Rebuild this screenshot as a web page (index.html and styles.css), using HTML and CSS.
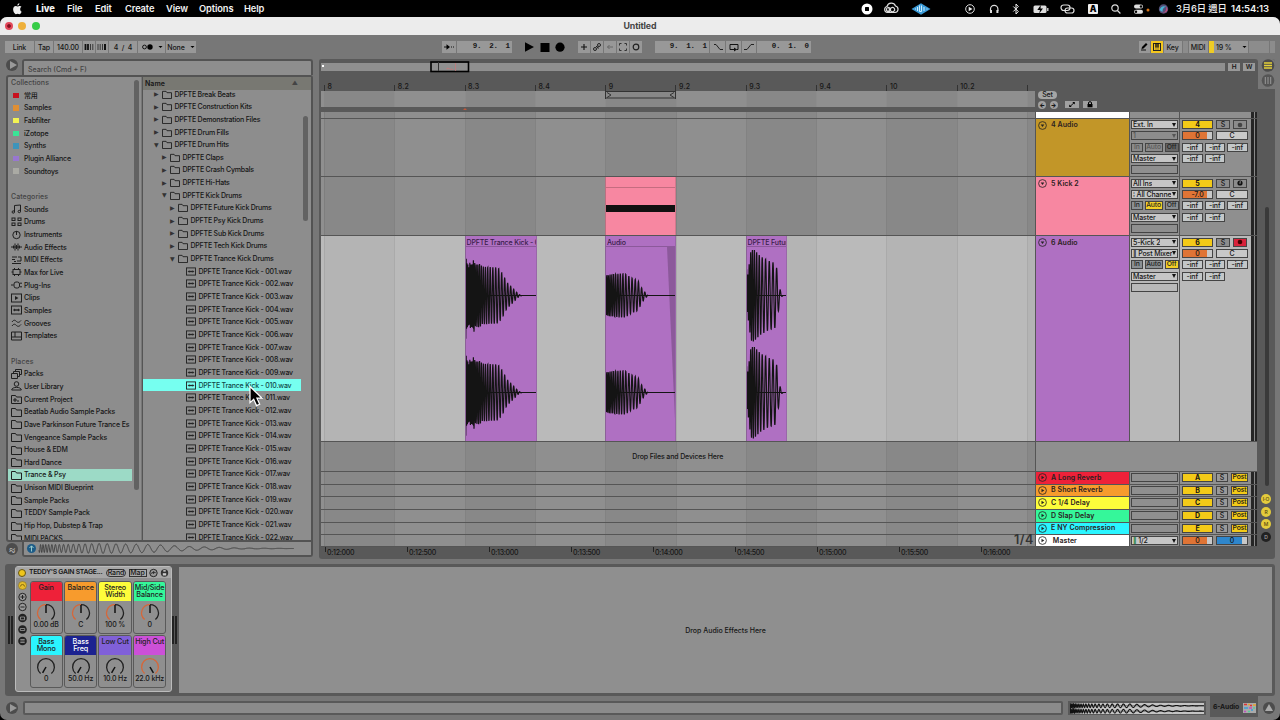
FILE: index.html
```html
<!DOCTYPE html>
<html lang="en">
<head>
<meta charset="utf-8">
<title>Untitled</title>
<link rel="stylesheet" href="styles.css">
</head>
<body>
<div class="menubar">
  <svg class="apple" viewBox="0 0 12 14"><path d="M8.2 0.3C8.3 1.8 7 3 5.8 3 5.7 1.600 6.900.500 8.200.300zM10.800 10.200C10.100 11.800 9.300 13 8.300 13 7.500 13 7.100 12.500 6.200 12.500 5.300 12.500 4.900 13 4.100 13 2.600 13 .900 10 .900 7.400.900 4.800 2.500 3.500 4 3.500 4.900 3.500 5.600 4.100 6.200 4.100 6.700 4.100 7.600 3.400 8.700 3.400 9.500 3.500 10.200 3.900 10.600 4.500 8.500 5.700 8.800 9.200 10.800 10.200z"/></svg>
  <span class="m-live">Live</span><span class="m-file">File</span><span class="m-edit">Edit</span><span class="m-create">Create</span><span class="m-view">View</span><span class="m-options">Options</span><span class="m-help">Help</span>
  <div class="tray">
    <svg class="w20" viewBox="0 0 20 16"><circle cx="10" cy="8" r="5.500" fill="#fff"/><rect x="8" y="6" width="4" height="4" rx=".5" fill="#000"/></svg>
    <svg class="w30" viewBox="0 0 30 16" fill="none" stroke="#ddd" stroke-width="1.200"><path d="M11 11.500h8a3.300 3.300 0 0 0 .5-6.500A4.500 4.500 0 0 0 11 5.500 3.100 3.100 0 0 0 11 11.500z"/><circle cx="12.500" cy="8.500" r="2"/><path d="M12 6l3 4.200c2 1.500 4.500-.5 3.500-2.500s-3-1.500-4 0l-2 2"/></svg>
    <svg class="w30" viewBox="0 0 30 16"><path d="M5.500 8L15 2.200 24.500 8 15 13.800z" fill="#3b9bd8"/><path d="M9 8h1M11.500 6v4M13.500 4.500v6h2v-6M18 6v4M20.500 8h1" stroke="#cef" fill="none"/></svg>
    <svg class="w28 g1" viewBox="0 0 28 16"><circle cx="14" cy="8" r="4.300" fill="none" stroke="#ddd"/><path d="M12.700 5.800L16.500 8l-3.800 2.200z" fill="#eee"/></svg>
    <svg class="w20" viewBox="0 0 20 16" fill="none" stroke="#ddd" stroke-width="1.200"><path d="M6.500 10V8a3.700 3.700 0 0 1 7.400 0v2"/><path d="M7 9v3M13.400 9v3" stroke-width="2"/></svg>
    <svg class="w24" viewBox="0 0 24 16" fill="none" stroke="#eee"><path d="M9.300 5.500l5 5L12 13V3l2.300 2.500-5 5"/></svg>
    <svg class="w26" viewBox="0 0 26 16"><rect x="5.500" y="4.500" width="13" height="7.500" rx="1.500" fill="#ddd"/><path d="M19.800 7v3" stroke="#ddd" stroke-width="1.300"/><path d="M12.800 4l-3.500 5H12l-.8 3.500L15 7.500h-2.500z" fill="#000"/></svg>
    <svg class="w28" viewBox="0 0 28 16" fill="none" stroke="#ddd" stroke-width="1.200"><rect x="7" y="4" width="9" height="5.500" rx="2.700"/><rect x="11" y="7" width="9" height="5" rx="2.500"/></svg>
    <b class="ime">A</b>
    <svg class="w24" viewBox="0 0 24 16" fill="none" stroke="#ddd" stroke-width="1.200"><circle cx="11" cy="7" r="3.200"/><path d="M13.400 9.500l3 3"/></svg>
    <svg class="w24 g2" viewBox="0 0 24 16"><rect x="2" y="3.500" width="9" height="4" rx="2" fill="#ddd"/><rect x="2" y="8.700" width="9" height="4" rx="2" fill="#ddd"/><circle cx="9" cy="5.500" r="1.200"/><circle cx="4" cy="10.700" r="1.200"/><circle cx="16" cy="9" r="1.500" fill="#d87518"/></svg>
    <svg class="w20" viewBox="0 0 20 16"><circle cx="7.500" cy="8" r="4.700" fill="#555078"/><path d="M3.500 9c2-5 5-4 7-3-3 0-4 2-4 5z" fill="#48b5d6"/><path d="M5.500 12c4 0 6-4 4-7 3 3 3 7-4 7z" fill="#c84878"/></svg>
    <span class="date">3月6日 週日</span><span class="clock">14:54:13</span>
  </div>
</div>

<div class="window">
  <div class="titlebar"><i class="tl red"></i><i class="tl yel"></i><i class="tl grn"></i><span>Untitled</span></div>

  <div class="toolbar">
    <div class="group t1">
      <span class="c" style="width:29px">Link</span><span class="c" style="width:18px">Tap</span><span class="c" style="width:28px">140.00</span>
      <span class="c" style="width:12px"><svg viewBox="0 0 10 8" width="10" height="8"><path d="M1.500 1v6M4 1v6" stroke="#111" stroke-width="1.800"/><path d="M6.500 1v6M8.800 1v6" stroke="#222" stroke-width=".8"/></svg></span>
      <span class="c" style="width:12px"><svg viewBox="0 0 10 8" width="10" height="8"><path d="M1 1v6M3.200 1v6M5.500 1v6" stroke="#222" stroke-width=".8"/><path d="M8 1v6" stroke="#111" stroke-width="2"/></svg></span>
      <span class="c" style="width:28px">4&nbsp; / &nbsp;4</span>
      <span class="c" style="width:27px"><svg viewBox="0 0 24 8" width="24" height="8"><circle cx="4.500" cy="4" r="1.900" fill="none" stroke="#111"/><circle cx="10" cy="4" r="2.700"/><path d="M18.500 3h4l-2 2z"/></svg></span>
      <span class="c" style="width:30px">None<svg class="dd" viewBox="0 0 5 4"><path d="M.5 1h4l-2 2z"/></svg></span>
    </div>
    <div class="group t2">
      <span class="c" style="width:14px"><svg viewBox="0 0 12 8" width="12" height="8"><path d="M1 4h4M8 4h1M10 4h1" stroke="#111"/><path d="M3.500 1.200L7 4 3.500 6.800z"/></svg></span><span class="c mono" style="width:55px">9. &nbsp;2. &nbsp;1</span>
    </div>
    <svg class="transport" viewBox="0 0 44 14"><path d="M2 2.200L11 7l-9 4.800z"/><rect x="17.500" y="3" width="9" height="9"/><circle cx="37" cy="7.200" r="4.600"/></svg>
    <div class="group t3">
      <span class="c" style="width:12px"><svg viewBox="0 0 10 10" width="10" height="10"><path d="M5 2v6M2 5h6" stroke="#111" stroke-width="1.100"/></svg></span>
      <span class="c" style="width:12px"><svg viewBox="0 0 10 10" width="10" height="10" fill="none" stroke="#222"><circle cx="3" cy="7" r="1.500"/><circle cx="7" cy="3" r="1.500"/><path d="M4 4.500h1.200L5.500 6H7"/></svg></span>
      <span class="c" style="width:12px"><svg viewBox="0 0 10 10" width="10" height="10" fill="none" stroke="#666"><path d="M8 5H2.500M4.500 3l-2 2 2 2"/></svg></span>
      <span class="c" style="width:12px"><svg viewBox="0 0 10 10" width="10" height="10" fill="none" stroke="#333"><path d="M1.500 3.500v-2h2M6.500 1.500h2v2M8.500 6.500v2h-2M3.500 8.500h-2v-2"/></svg></span>
      <span class="c" style="width:12px"><svg viewBox="0 0 10 10" width="10" height="10"><circle cx="5" cy="5" r="2.800" fill="none" stroke="#222" stroke-width="1.200"/></svg></span>
    </div>
    <div class="group t4">
      <span class="c mono" style="width:54px">9. &nbsp;1. &nbsp;1</span>
      <span class="c" style="width:15px"><svg viewBox="0 0 12 10" width="12" height="10" fill="none" stroke="#222"><path d="M2 2.500h2l4 5h3"/></svg></span>
      <span class="c" style="width:15px"><svg viewBox="0 0 12 10" width="12" height="10" fill="none" stroke="#111"><path d="M6 7.500H2v-5h8v5H8.500"/><path d="M6 5.500l3 2-3 2z" fill="#111" stroke="none"/></svg></span>
      <span class="c" style="width:14px"><svg viewBox="0 0 12 10" width="12" height="10" fill="none" stroke="#222"><path d="M1 7.500h3l4-5h3"/></svg></span>
      <span class="c mono" style="width:54px">0. &nbsp;1. &nbsp;0</span>
    </div>
    <div class="group t5">
      <span class="c" style="width:11px"><svg viewBox="0 0 10 10" width="10" height="10"><path d="M2 8h5" stroke="#111"/><path d="M2.500 7L3 5l4-4 1.500 1.500L4.500 6.500z"/></svg></span>
      <span class="c on" style="width:12px"><svg viewBox="0 0 10 10" width="10" height="10"><rect x="1.500" y="1.500" width="7" height="7" fill="none" stroke="#222"/><path d="M4 1v4.500M6 1v4.500" stroke="#111" stroke-width="1.400"/><path d="M4 5v4M6 5v4" stroke="#333" stroke-width=".5"/></svg></span>
      <span class="c" style="width:18px">Key</span><span class="c dim" style="width:5px"></span><span class="c" style="width:19px">MIDI</span>
      <span class="c cpu" style="width:39px">19 %<svg class="dd" viewBox="0 0 5 4"><path d="M.5 1h4l-2 2z"/></svg></span><span class="c dim" style="width:20px"></span><span class="c dim" style="width:5px"></span>
    </div>
  </div>

  <div class="main">
    <div class="browser">
      <div class="search-row"><span class="round play-btn"></span><div class="search">Search (Cmd + F)</div></div>
      <div class="lists">
        <div class="sidebar"><div class="side-rows" id="side"></div><i class="sbar side-thumb"></i></div>
        <div class="files">
          <div class="name-head"><span>Name</span><i>▲</i></div>
          <div class="tree-clip"><div class="tree" id="tree"></div><i class="sbar tree-thumb"></i></div>
        </div>
      </div>
      <div class="preview-row"><span class="round groove">≈</span>
        <div class="preview"><svg viewBox="0 0 287 13" width="287" height="13"><circle cx="7.500" cy="6.500" r="4.500" fill="#1d5b87"/><path d="M7.500 9.500V4M5.500 6l2-2.200 2 2.200" stroke="#9cc" fill="none"/><path id="previewWave" fill="none" stroke="#3d3d3d" stroke-width=".9"/></svg></div>
      </div>
    </div>

    <div class="arrangement">
      <div class="arr-top">
        <div class="arr-head">
          <div class="overview-row">
            <div class="overview"><i class="ov-white"></i><svg class="ov-box" viewBox="0 0 40 12"><rect x="1" y="1" width="37.500" height="9.500" fill="none" stroke="#000" stroke-width="1.600"/><path d="M8.500 1v9" stroke="#333"/><path d="M17 8.500V7l3 1 3 .5M25.500 2v8" stroke="#c77" stroke-width=".7" fill="none"/></svg></div>
            <span class="hw">H</span><span class="hw">W</span>
          </div>
          <div class="beats" id="beats"></div>
        </div>
        <div class="view-switch">
          <svg viewBox="0 0 14 30" width="14" height="30"><circle cx="7" cy="6.500" r="6.300" fill="#4c4c4c"/><path d="M3 4h8M3 6.500h8M3 9h8" stroke="#e4cf38" stroke-width="1.500"/><circle cx="7" cy="21.500" r="6.300" fill="#555"/><path d="M4.300 18v7M7 18v7M9.700 18v7" stroke="#999"/></svg>
        </div>
      </div>
      <div class="arr-ruler">
        <div class="strip zebra"><div class="loop"><svg viewBox="0 0 71 8" width="71" height="8" fill="none" stroke="#333"><path d="M.5 0v8M70.500 0v8M0 .5h71M0 7h71M2 1.500l4 2.500-4 2.500M69 1.500L65 4l4 2.500"/></svg></div><i class="playmark"></i></div>
        <div class="set">
          <span class="pill">Set</span>
          <div class="set-row"><span class="rb">←</span><span class="rb">→</span><span class="sb"><svg viewBox="0 0 12 7" width="12" height="7"><path d="M4 5.500L8 1.800" stroke="#111"/><path d="M6.300 1h2.500v2.500zM3.200 3.500V6h2.500z"/></svg></span><span class="sb"><svg viewBox="0 0 12 7" width="12" height="7"><rect x="3.500" y="3" width="5" height="3.300"/><path d="M4.500 3V2a1.500 1.300 0 0 1 3 0v1" fill="none" stroke="#000"/></svg></span></div>
        </div>
      </div>
      <div class="arr-body">
        <div class="tracks" id="tracks"></div>
        <div class="arr-right"><i class="vbar"></i>
          <span class="badge">I·O</span><span class="badge">R</span><span class="badge">M</span><span class="badge off">D</span></div>
      </div>
      <div class="times" id="times"></div>
      <span class="quarter">1/4</span>
    </div>
  </div>

  <div class="device-panel">
    <div class="bars"><i></i><i></i></div>
    <div class="rack">
      <div class="rack-title"><i class="led"></i><b>TEDDY'S GAIN STAGE...</b><span class="rt pill2">Rand</span><span class="rt">Map</span>
        <svg viewBox="0 0 20 10" width="20" height="10"><circle cx="4.500" cy="5" r="3.700" fill="#999" stroke="#222"/><path d="M2.500 5.500c1-3 2 2 2-1s1 2 2 0" stroke="#111" fill="none"/><circle cx="15.500" cy="5" r="3.700" fill="#333"/><rect x="13.800" y="5.200" width="3.400" height="2.300" fill="#ccc"/><rect x="14.300" y="2" width="2.400" height="1.700" fill="#bbb"/></svg></div>
      <div class="rack-body">
        <svg class="rack-icons" viewBox="0 0 12 108" width="12" height="108"><circle cx="5.500" cy="4.500" r="4" fill="#e5bd28" stroke="#8a7524" stroke-width=".7"/><path d="M3.500 5.500a2 2 0 1 1 4 0" fill="none" stroke="#876d10"/>
          <g fill="#999" stroke="#222"><circle cx="5.500" cy="16" r="3.700"/><circle cx="5.500" cy="26" r="3.700"/><path d="M3.500 16h4M5.500 14v4M3.500 26h4"/></g>
          <g fill="#222"><circle cx="5.500" cy="37" r="4.300"/><circle cx="5.500" cy="48.500" r="4.300"/><circle cx="5.500" cy="60" r="4.300"/></g><path d="M3.500 36h4v2.800h-4zM3.300 47.500h4.400v2h-4.400zM3.300 58.500h4.400M3.300 60h4.400M3.300 61.500h4.400" fill="none" stroke="#aaa" stroke-width=".7"/></svg>
        <div class="macros" id="macros"></div>
      </div>
    </div>
    <div class="bars"><i></i><i></i></div>
    <div class="fx-drop">Drop Audio Effects Here</div>
  </div>

  <div class="status">
    <span class="round play-btn"></span>
    <div class="info"></div>
    <div class="mini"><svg viewBox="0 0 134 11" width="134" height="11"><path d="M0 0h134v11H0z" fill="#c4c4c4"/><path d="M0 2.800h134M0 8.200h134" stroke="#555" stroke-width=".7"/><path id="miniWave" fill="none" stroke="#111" stroke-width="1.100"/></svg></div>
    <div class="tab"><b>6-Audio</b><svg viewBox="0 0 13 10" width="13" height="10"><path d="M0 0h13v10H0z" fill="#aaa"/><path d="M1 1.500h3M7 2.500h2" stroke="#d33" stroke-width="1.500"/><path d="M5 1.500h2M10 2h3" stroke="#e9a32c" stroke-width="1.500"/><path d="M1 5h4M8 7h2" stroke="#3a9ed8" stroke-width="1.700"/><path d="M6 5h3M1 8.500h2" stroke="#c050c0" stroke-width="1.500"/><path d="M10 5h2M5 8.500h2" stroke="#5c9" stroke-width="1.500"/></svg></div>
    <span class="round up-btn"></span>
  </div>
</div>
<svg class="cursor" viewBox="0 0 14 24"><path d="M1 1.500v16.200l3.700-3.400 2.800 6.300 3.200-1.400-2.800-6.100h5z" fill="#000" stroke="#fff" stroke-width="1.200"/></svg>
<script src="app.js"></script>
</body>
</html>
```
FILE: styles.css
```css
*{box-sizing:border-box}
body{margin:0;width:1280px;height:720px;overflow:hidden;background:#000;color:#161616;font:500 7px/1 Inter,"Noto Sans CJK TC",sans-serif;letter-spacing:-.13px;position:relative}
i{font-style:normal}
svg{display:block;flex:none}
.menubar{height:17px;display:flex;align-items:center;color:#f2f2f2;font-size:9.3px;font-weight:600;padding-left:12px;white-space:nowrap;letter-spacing:-.1px}
.apple{width:11px;height:12px;fill:#eee;margin-right:13px}
.menubar span{height:14px;line-height:14px}
.m-live{width:31px;font-weight:800}.m-file{width:28px}.m-edit{width:30px}.m-create{width:41px}.m-view{width:33px}.m-options{width:45px}
.tray{margin-left:auto;display:flex;align-items:center;height:16px;padding-right:12px}
.tray svg{height:16px}
.w20{width:20px}.w24{width:24px}.w26{width:26px}.w28{width:28px}.w30{width:30px}
.tray>:first-child{margin-right:-1px}
.g1{margin-left:20px}.g2{margin-left:4px}
.ime{color:#000;background:#eee;width:10px;height:10px;line-height:10px;border-radius:1px;margin:0 6px 0 6px;text-align:center;font-size:8.500px}
.tray .date{margin-left:0;width:55px;font-weight:500}
.tray .clock{font-size:9.5px;width:37px}
.window{height:703px;background:#777;border-radius:7px;overflow:hidden;display:flex;flex-direction:column}
.titlebar{height:18px;background:#ececec;display:flex;align-items:center;padding-left:5px;gap:5.300px;flex:none}
.titlebar span{flex:1;text-align:center;margin-right:45px;font-size:8.8px;font-weight:700;color:#444}
.tl{width:8px;height:8px;border-radius:50%}
.red{background:radial-gradient(#821020 0 25%,#e2485a 40%)}.yel{background:#eeb03b}.grn{background:#37cc47}
.toolbar{height:24px;flex:none;display:flex;align-items:center;padding-left:5px}
.group{display:flex;gap:1px;height:12px}
.c{background:#989898;display:flex;align-items:center;justify-content:center;white-space:nowrap;flex:none;position:relative}
.mono{font-family:"Liberation Mono",monospace;font-weight:700;font-size:7.500px;justify-content:flex-end;padding-right:2px;word-spacing:-.5px}
.t2{margin-left:246px}.transport{width:44px;height:14px;margin-left:11px}
.t3{margin-left:11px}.t4{margin-left:13px}.t5{margin-left:auto;margin-right:5.500px}
.dd{width:5px;height:4px;margin-left:5px}
.on{background:#f4c71f}.dim{background:#8c8c8c}
.cpu{border-left:5px solid #eecb25;justify-content:flex-start;padding-left:2.500px}.cpu .dd{margin-left:10px}
.main{height:501px;flex:none;display:flex;padding-left:6px}
.browser{width:307px;height:498px;flex:none}
.search-row{height:16px;display:flex;justify-content:space-between}
.round{width:12px;height:12px;border-radius:50%;background:#4c4c4c;display:flex;align-items:center;justify-content:center;flex:none}
.play-btn::before{content:"";border-left:7px solid #999;border-top:4px solid transparent;border-bottom:4px solid transparent;margin-left:2px}
.up-btn::before{content:"";border-bottom:7px solid #aaa;border-left:4px solid transparent;border-right:4px solid transparent;margin-bottom:2px}
.search{width:291px;background:#8e8e8e;border:2px solid #535353;border-bottom:0;border-radius:3px 3px 0 0;color:#444;padding:4.500px 4px;letter-spacing:0}
.lists{height:467px;border:2px solid #535353;background:#8d8d8d;display:flex;border-radius:3px 3px 0 3px}
.sidebar{width:134px;position:relative;overflow:hidden;border-right:1px solid #777}
.side-rows{margin-top:-.7px}
.side-row{height:12.670px;display:flex;align-items:center;padding-left:3px;white-space:nowrap;width:124px;overflow:hidden;letter-spacing:-.16px}
.side-row svg{width:11px;height:10px;margin-right:2px;fill:none;stroke:#1f1f1f}
.side-row.h{color:#444;letter-spacing:.05px}
.side-row i{width:5.500px;height:5.500px;margin:0 5.500px 0 2px}
.side-row.sel{background:#9cdac6}
.sbar{position:absolute;background:#626262;border-radius:3px;width:4.500px}
.side-thumb{left:126px;top:3px;height:410px}
.files{width:169px;border-left:1px solid #555;overflow:hidden}
.name-head{height:12.500px;background:#787872;display:flex;align-items:center;justify-content:space-between;padding:0 13px 0 2px;font-weight:600;letter-spacing:.05px}
.name-head i{font-size:6px;color:#444}
.tree-clip{height:451px;position:relative;overflow:hidden}
.tree{margin-top:-1.800px}
.row{height:12.670px;display:flex;align-items:center;white-space:nowrap;width:158px;letter-spacing:-.21px}
.row svg{width:10px;height:9px;margin-right:2.500px;fill:none;stroke:#1f1f1f}
.row .tri{width:8px;font-size:6px;color:#333;font-family:"DejaVu Sans",sans-serif}
.row.sel{background:#76fff0;color:#104848}
.tree-thumb{left:160px;top:26px;height:105px}
.preview-row{height:15px;display:flex;justify-content:space-between}
.groove{margin-top:1px;color:#aaa;font-size:11px}
.preview{width:291px;border:2px solid #535353;border-top:0;background:#8d8d8d;border-radius:0 0 3px 3px}

.arrangement{margin-left:6px;width:955.500px;height:500px;background:#595959;border-radius:3px;display:flex;flex-direction:column;position:relative}
.arr-top{height:30px;display:flex;background:#777;border-radius:3px 3px 0 0}
.arr-head{width:940px;background:#595959;border-radius:3px 3px 0 0}
.overview-row{display:flex;height:16px;padding:4px 0 0 2px;gap:3px}
.overview{width:904px;height:8px;background:#8f8f8f;position:relative}
.ov-white{position:absolute;left:1px;top:2px;width:2px;height:2px;background:#fff}
.ov-box{position:absolute;left:109px;top:-2px;width:40px;height:12px}
.hw{width:12px;height:7.500px;background:#999;display:flex;align-items:center;justify-content:center;font-size:6.500px;font-weight:600}
.beats{display:flex;width:722px;overflow:hidden;height:16px;padding:8px 0 0 5px;align-items:flex-start;letter-spacing:.2px}
.beats span{width:70.300px;border-left:1px solid #333;border-image:linear-gradient(transparent 35%,#333 35%) 1;padding-left:2.500px;height:8px;line-height:8px;flex:none}
.view-switch{padding-left:2.500px}
.arr-ruler{height:23px;padding:2px 0 0 2px;display:flex}
.zebra{background:linear-gradient(90deg,#8f8f8f 3.500px,transparent 3.500px),repeating-linear-gradient(90deg,#888 0 70.300px,#8f8f8f 70.300px 140.600px) 3.500px 0}
.strip{width:714px;height:16px;position:relative}
.loop{position:absolute;left:284px;top:0}
.playmark{position:absolute;left:142px;top:16.500px;border:2px solid transparent;border-bottom:2px solid #c0583a;border-top:0}
.set{padding-left:3px}
.pill{display:block;width:19px;height:7.500px;border-radius:4px;background:#a5a5a5;line-height:7.500px;text-align:center}
.set-row{display:flex;margin-top:2px;gap:3.500px}
.rb{width:8px;height:8px;border-radius:50%;background:#a0a0a0;text-align:center;line-height:8px;font-size:6px;font-weight:900}
.sb{width:14px;height:7.500px;background:#a0a0a0;margin-left:4px;padding-left:1px}
.sb+.sb{margin-left:0}
.arr-body{height:435px;display:flex;padding-left:2px}
.tracks{width:936px;height:435px;overflow:hidden}
.track{display:flex;border-bottom:1.500px solid #555;background:#8f8f8f}
.lane{width:714.500px;position:relative;overflow:hidden;border-right:1.500px solid #555;flex:none}
.track.selected{background:#b9b9b9}
.track.selected .lane{background:linear-gradient(90deg,#bababa 3.500px,transparent 3.500px),repeating-linear-gradient(90deg,#b4b4b4 0 70.300px,#bababa 70.300px 140.600px) 3.500px 0}
.lane u{position:absolute;top:0;bottom:0;width:1px;background:#0001}
.nm{width:94px;border-right:1.500px solid #555;padding:2.500px 0 0 2px;display:flex;align-items:flex-start;flex:none;font-weight:600;color:#2a2020;letter-spacing:.08px}
.nm svg{width:9px;height:9px;margin:-.5px 4.500px 0 0;fill:none;stroke:#222;stroke-width:.8}
.io{width:50.500px;border-right:1.500px solid #555;padding:1.500px 1.500px 0;flex:none}
.io>*,.mx>*{margin-bottom:2.350px}
.sel-box{height:9px;background:#c6c6c6;border:1px solid #444;display:flex;justify-content:space-between;align-items:center;padding-left:1px;white-space:nowrap;overflow:hidden;font-size:7px}
.sel-box::after{content:"";border:2.500px solid transparent;border-top:4px solid #111;border-bottom:0;margin:0 1px 0 0;flex:none}
.sel-box span{overflow:hidden}
.sel-box.dis{background:#8d8d8d;color:#555}.sel-box.dis::after{border-top-color:#555}
.empty{height:9px;border:1px solid #444}
.trio{display:flex;gap:2px;height:9px}
.trio span,.mx span{border:1px solid #444;height:9px;display:flex;align-items:center;justify-content:center;font-size:7px;flex:none}
.trio span{font-size:6.800px;background:#8a8f92;color:#222}
.trio span:nth-child(1){width:11.500px}.trio span:nth-child(2){width:18px}.trio span:nth-child(3){width:14px}
.trio span.x{background:#8a8a8a;color:#5a5a5a}.trio span.dk{background:#666}.trio span.y{background:#f2cf27}
.mx{padding:1.500px 0 0 2px;width:70px;flex:none}
.mx>div{display:flex;gap:2px;height:9px}
.mx span{background:#c8c8c8}
.mx .num{width:31px;background:#f3ca18;margin-right:1px;font-weight:700}
.mx .s{width:14px;background:#8c8c8c;margin-right:1px}
.mx .vol{width:31px;margin-right:1px;background:linear-gradient(90deg,#df7435 83%,#c8c8c8 83%)}
.mx .pan{width:32px}.mx .inf{width:20.500px;background:#c3c7c8}
.mx .rec{background:#d9223a}
.mx .master-pan{background:linear-gradient(90deg,#2e86cc 83%,#c8c8c8 83%)}
.meters{width:7px;margin-left:1px;background:linear-gradient(90deg,#252525 2.500px,#888 2.500px 3.500px,#252525 3.500px 5.500px,#777 5.500px);flex:none}
.ret .nm{padding-top:1.500px}.ret .io{padding-top:1px}.ret .mx{padding-top:1px}
.mx .post{width:17px;background:#f3ca18;font-size:6.800px}.mx .sr{width:12px;background:#999;margin-right:1px}
.drop{background:#8f8f8f}.drop .lane{padding:11px 0 0;text-align:center}
.clip{position:absolute;top:0;bottom:0;overflow:hidden;border-left:1px solid #4445;border-right:1px solid #4443;white-space:nowrap}
.clip p{margin:0;height:11px;padding:2.500px 0 0 1px;border-bottom:1px solid #0003;color:#381c48}
.clip svg{position:absolute;left:-1px;top:0}
.purple{background:#af70c2}.pink{background:#f787a1}
.midi{position:absolute;left:0;right:0;top:28px;height:7px;background:#111}
.arr-right{padding-left:7px;display:flex;flex-direction:column;width:17px}
.vbar{width:4px;height:279px;background:#3a3a3a;border-radius:2px;margin:95px 0 8px 1px;flex:none}
.badge{width:10px;height:10px;border-radius:50%;background:#e4cb3c;margin:0 0 2.700px -3px;text-align:center;line-height:10px;font-size:5px;color:#554810;flex:none}
.badge.off{background:#222;color:#aaa}
.times{height:11px;display:flex;padding:0 0 0 5.500px;width:717px;overflow:hidden;letter-spacing:-.3px}
.times span{width:82px;border-left:1px solid #222;height:5px;padding:2px 0 0 1.500px;flex:none}
.quarter{position:absolute;left:695px;top:475px;font-size:12.500px;color:#333;letter-spacing:.5px;font-weight:600}

.device-panel{height:132px;margin:4px 5px 0 5px;background:#595959;border-radius:3px;padding:3px;display:flex;flex:none}
.bars{width:7px;display:flex;gap:1px;align-items:center}
.bars i{width:2px;height:28px;background:#222}
.rack{width:157px;margin-top:-1px;height:126px;background:#8f8f8f;border:1.500px solid #bbb;border-radius:3px;flex:none}
.rack-title{height:11px;background:#a7a7a7;display:flex;align-items:center;padding-left:2px;white-space:nowrap}
.led{width:8px;height:8px;border-radius:50%;background:#efc61c;border:1px solid #665514;margin-right:3px;flex:none}
.rack-title b{font-weight:600;width:77px;font-size:6.800px;letter-spacing:-.25px}
.rt{border:1px solid #333;height:8px;line-height:6px;width:18px;text-align:center;margin-right:2.500px}.pill2{border-radius:4px;width:20px}
.rack-body{display:flex;padding:3px 0 0 1px}
.macros{display:grid;grid-template-columns:repeat(4,33.300px);grid-template-rows:53px 53px;gap:1.200px 1.200px;margin-left:.5px}
.macro{border:1px solid #5a5a5a;border-radius:3px;overflow:hidden;text-align:center;position:relative}
.macro b{display:flex;flex-direction:column;height:18.500px;padding-top:1.500px;line-height:7.500px;font-weight:500;font-size:7.200px}
.macro svg{margin:1.500px auto -3px}
.macro span{display:block;font-size:7px;white-space:nowrap}
.fx-drop{margin-left:0;flex:1;background:#8f8f8f;display:flex;align-items:center;justify-content:center;letter-spacing:0}
.status{height:24px;display:flex;align-items:center;padding:0 5px 0 6px;flex:none}
.info{width:1040px;height:14px;margin-left:5px;background:#8b8b8b;border:2px solid #595959;border-radius:2px}
.mini{width:138px;height:14px;margin-left:5px;border:2px solid #595959}
.tab{margin-left:4px;width:48px;height:22px;background:#595959;margin-top:-4px;display:flex;align-items:center;justify-content:space-between;padding:3px 2px 0 3px;font-size:6.800px;white-space:nowrap}
.up-btn{margin-left:5px}
.cursor{position:absolute;left:249px;top:385px;width:14px;height:24px}
```
FILE: app.js
```js
const $ = id => document.getElementById(id);
const folder = '<path d="M.5 9.500V1.500h4l1 1.500h5v6.500z"/>';
const wavIcon = '<rect x=".5" y="1" width="10" height="8"/><path d="M2 5h7M3.500 3.800v2.400M4.800 4.200v1.600M6.200 4.200v1.600M7.500 3.800v2.400" stroke-width=".9"/>';
const icons = {
  Sounds: '<path d="M3.500 8V1.500l6-.5v6.500"/><circle cx="2.300" cy="8" r="1.200"/><circle cx="8.300" cy="7.500" r="1.200"/>',
  Drums: '<rect x="1" y="1" width="3" height="2.500"/><rect x="7" y="1" width="3" height="2.500"/><rect x="1" y="6" width="3" height="2.500"/><rect x="7" y="6" width="3" height="2.500"/>',
  Instruments: '<circle cx="5.500" cy="5" r="3.700"/><path d="M5.500 1v4"/>',
  'Audio Effects': '<path d="M0 5h11M2.500 3.500v3M4 1.500v7M5.500 3v4M7 1.500v7M8.500 3.500v3"/>',
  'MIDI Effects': '<path d="M1 2h5M1 4.500h3M1 8.500h9M7 2h3v4H6M3 6.500h2"/>',
  'Max for Live': '<rect x="2" y="2.500" width="7" height="5"/><path d="M3.500 1v1.500M7.500 1v1.500M3.500 7.500V9M7.500 7.500V9M.5 5H2M9 5h1.500"/>',
  'Plug-Ins': '<path d="M0 5h2.500M9 3.200h2M9 6.800h2"/><rect x="3" y="2" width="5.500" height="6" rx="2"/>',
  Clips: '<rect x=".5" y="1" width="10" height="8"/><path d="M4 3l3.500 2L4 7z" fill="#1f1f1f" stroke="none"/>',
  Samples: wavIcon,
  Grooves: '<path d="M1 4c2-3 3.500-1.500 4.500-.5s2.500 1.500 4.500-1M1 8c2-3 3.500-1.500 4.500-.5s2.500 1.500 4.500-1"/>',
  Templates: '<path d="M.5 1h10v8H.5zM.5 6h10M4 1v5"/>',
  Packs: '<path d="M.5 4.500h6v5h-6zM2.500 4.500v-2h6v5h-2M4.500 2.500v-2h6v5h-2"/>',
  'User Library': '<circle cx="5.500" cy="3" r="2.300"/><path d="M.7 9c0-3.500 9.600-3.500 9.600 0z"/>',
  'Current Project': folder + '<path d="M3 5h2v2H3zM6 7h2" />'
};
const svg = (inner, vb = '0 0 11 10') => `<svg viewBox="${vb}">${inner}</svg>`;

const collections = [['常用', '#c8101e'], ['Samples', '#e08f33'], ['Fabfilter', '#f4f452'], ['iZotope', '#39e596'], ['Synths', '#3d94bb'], ['Plugin Alliance', '#9877d0'], ['Soundtoys', '#aaaaa4']];
const cats = ['Sounds', 'Drums', 'Instruments', 'Audio Effects', 'MIDI Effects', 'Max for Live', 'Plug-Ins', 'Clips', 'Samples', 'Grooves', 'Templates'];
const places = ['Packs', 'User Library', 'Current Project', 'Beatlab Audio Sample Packs', 'Dave Parkinson Future Trance Es', 'Vengeance Sample Packs', 'House & EDM', 'Hard Dance', 'Trance & Psy', 'Unison MIDI Blueprint', 'Sample Packs', 'TEDDY Sample Pack', 'Hip Hop, Dubstep & Trap', 'MIDI PACKS'];
const head = t => `<div class="side-row h">${t}</div>`;
const item = t => `<div class="side-row${t === 'Trance & Psy' ? ' sel' : ''}">${svg(icons[t] || folder)}<span>${t.replace('&', '&amp;')}</span></div>`;
$('side').innerHTML = head('Collections')
  + collections.map(([t, c]) => `<div class="side-row"><i style="background:${c}"></i><span>${t}</span></div>`).join('')
  + head('') + head('Categories') + cats.map(item).join('') + head('') + head('Places') + places.map(item).join('');

const tree = [[0, 0, 'Break Beats'], [0, 0, 'Construction Kits'], [0, 0, 'Demonstration Files'], [0, 0, 'Drum Fills'], [0, 1, 'Drum Hits'], [1, 0, 'Claps'], [1, 0, 'Crash Cymbals'], [1, 0, 'Hi-Hats'], [1, 1, 'Kick Drums'], [2, 0, 'Future Kick Drums'], [2, 0, 'Psy Kick Drums'], [2, 0, 'Sub Kick Drums'], [2, 0, 'Tech Kick Drums'], [2, 1, 'Trance Kick Drums']];
let rows = tree.map(([d, open, t]) => `<div class="row" style="padding-left:${11 + d * 8}px"><span class="tri">${open ? '▼' : '▶'}</span>${svg(folder)}<span>DPFTE ${t}</span></div>`).join('');
for (let n = 1; n <= 22; n++) rows += `<div class="row${n === 10 ? ' sel' : ''}" style="padding-left:43px">${svg(wavIcon)}<span>DPFTE Trance Kick - ${String(n).padStart(3, '0')}.wav</span></div>`;
$('tree').innerHTML = rows;

$('beats').innerHTML = ['8', '8.2', '8.3', '8.4', '9', '9.2', '9.3', '9.4', '10', '10.2', ''].map(t => `<span>${t}</span>`).join('');
$('times').innerHTML = ['0:12:000', '0:12:500', '0:13:000', '0:13:500', '0:14:000', '0:14:500', '0:15:000', '0:15:500', '0:16:000'].map(t => `<span>${t}</span>`).join('');

// Amplitude envelope points are [x, height]; the period widens from p0 to p1.
function wave(env, cy, p0, p1, x0 = 0, y0 = 0) {
  const end = env[env.length - 1][0];
  const amp = x => {
    for (let i = 1; i < env.length; i++) if (x <= env[i][0]) {
      const [a, b] = env[i - 1], [c, d] = env[i];
      return b + (d - b) * (x - a) / (c - a);
    }
    return 0;
  };
  let d = '', phase = 0;
  for (let x = 0; x <= end; x += 0.15) {
    const p = p0 + (p1 - p0) * Math.min(1, x / (end * 0.55));
    phase += 0.15 / p * Math.PI * 2;
    d += (d ? 'L' : 'M') + (x + x0).toFixed(2) + ' ' + (cy + y0 + Math.sin(phase) * amp(x)).toFixed(2);
  }
  return d;
}
const clipWave = (env, w, p0, p1) => `<svg width="${w}" height="205" fill="none" stroke="#141414" stroke-width="1.200">${[59.5, 156.5].map(c => `<path d="${wave(env, c, p0, p1)}"/><path d="M0 ${c}H${w}" stroke-width="1"/>`).join('')}</svg>`;
const kickA = [[0, 44], [1, 43], [1.700, 33], [4, 29], [5, 34], [7, 32], [9, 37], [10, 31], [15, 32], [17, 29], [33, 28], [38, 21], [42, 13], [48, 7], [54, 1], [57, 0]];
const kickB = [[0, 20], [5, 21], [15, 22], [20, 22], [26, 18], [33, 15], [37, 7], [41, 2], [43, 0]];
const kickC = [[0, 44], [1, 15], [3, 30], [5, 46], [8, 46], [15, 39], [22, 35], [30, 32], [33, 12], [35, 2], [37, 0]];
const clip = (x, w, cls, body) => `<div class="clip ${cls}" style="left:${x}px;width:${w}px">${body}</div>`;
const arrow = '<circle cx="4.500" cy="4.500" r="3.900"/><path d="M2.700 3.500h3.600L4.500 6z" fill="#222" stroke="none"/>';
const playIcon = '<circle cx="4.500" cy="4.500" r="3.900"/><path d="M3.500 2.700v3.600L6.300 4.500z" fill="#222" stroke="none"/>';
const dot = c => `<svg width="6" height="6" viewBox="0 0 6 6"><circle cx="3" cy="3" r="2.300" fill="${c}"/></svg>`;
const midiDot = '<svg width="6" height="6" viewBox="0 0 6 6"><circle cx="3" cy="3" r="2.600" fill="#111"/><path d="M3 4V1.500l1 .8" stroke="#aaa" stroke-width=".7" fill="none"/></svg>';
const box = (t, c = '') => `<div class="sel-box ${c}"><span>${t}</span></div>`;
const lines = Array.from({length: 11}, (_, i) => `<u style="left:${3 + i * 70.3}px"></u>`).join('');

function track(o) {
  return `<div class="track ${o.cls || ''}" style="height:${o.h}px"><div class="lane ${o.cls ? '' : 'zebra'}">${lines}${o.clips || ''}</div>
  <div class="nm" style="background:${o.color}">${svg(arrow, '0 0 9 9')}${o.name}</div>
  <div class="io">${box(o.from)}${box(o.ch, o.dis || '')}<div class="trio">${o.mon}</div>${box('Master')}<div class="empty"></div></div>
  <div class="mx"><div><span class="num">${o.n}</span><span class="s">S</span><span class="s ${o.rec || ''}">${o.dot}</span></div>
  <div><span class="vol">${o.vol}</span><span class="pan">C</span></div><div><span class="inf">-inf</span><span class="inf">-inf</span><span class="inf">-inf</span></div><div><span class="inf">-inf</span><span class="inf">-inf</span></div></div><div class="meters"></div></div>`;
}
let html = `<div class="track" style="height:6.500px"><div class="lane zebra">${lines}</div><div class="nm" style="background:#fff"></div><div class="io"></div><div class="mx"></div><div class="meters"></div></div>`;
html += track({h: 58.5, color: '#c29628', name: '4 Audio', from: 'Ext. In', ch: '1', dis: 'dis', mon: '<span class="x">In</span><span class="x">Auto</span><span class="dk">Off</span>', n: 4, vol: '0', dot: dot('#444')});
html += track({h: 59, color: '#f787a1', name: '5 Kick 2', from: 'All Ins', ch: '⁞ All Channe', mon: '<span>In</span><span class="y">Auto</span><span>Off</span>', n: 5, vol: '-7.0', dot: midiDot, clips: clip(284, 71, 'pink', '<p></p><div class="midi"></div>')});
html += track({h: 205.5, cls: 'selected', rec: 'rec', color: '#af70c2', name: '6 Audio', from: '5-Kick 2', ch: '‖ Post Mixer', mon: '<span>In</span><span>Auto</span><span class="y">Off</span>', n: 6, vol: '0', dot: dot('#400'),
  clips: clip(143.5, 72.5, 'purple', '<p>DPFTE Trance Kick - 0</p>' + clipWave(kickA, 72, 0.7, 3))
    + clip(284, 71, 'purple', '<p>Audio</p><svg width="71" height="205"><path d="M62 11h9v194z" fill="#0003"/></svg>' + clipWave(kickB, 71, 1.2, 3.2))
    + clip(424.5, 41.5, 'purple', '<p>DPFTE Futur</p>' + clipWave(kickC, 41, 1, 3.7))});
html += `<div class="track drop" style="height:30.500px"><div class="lane zebra">${lines}Drop Files and Devices Here</div></div>`;
[['A', 'Long Reverb', '#ee2139'], ['B', 'Short Reverb', '#f79b2d'], ['C', '1/4 Delay', '#fdfd3b'], ['D', 'Slap Delay', '#35f79a'], ['E', 'NY Compression', '#2af5ff']].forEach(([k, t, c]) => {
  html += `<div class="track ret" style="height:12.700px"><div class="lane zebra">${lines}</div><div class="nm" style="background:${c}">${svg(playIcon, '0 0 9 9')}${k} ${t}</div><div class="io"><div class="empty"></div></div><div class="mx"><div><span class="num">${k}</span><span class="sr">S</span><span class="post">Post</span></div></div><div class="meters"></div></div>`;
});
html += `<div class="track ret" style="height:12px"><div class="lane zebra">${lines}</div><div class="nm" style="background:#fff">${svg(playIcon, '0 0 9 9')}&nbsp;Master</div><div class="io">${box('<span style="color:#087a1c">‖</span> 1/2')}</div><div class="mx"><div><span class="vol">0</span><span class="pan master-pan">0</span></div></div><div class="meters"></div></div>`;
$('tracks').innerHTML = html;

const macros = [['Gain', '', '#ee2139', '0.00 dB', .5], ['Balance', '', '#f79b2d', 'C', .5], ['Stereo', 'Width', '#fdfd3b', '100 %', .5], ['Mid/Side', 'Balance', '#35f79a', '0', .5], ['Bass', 'Mono', '#2af5ff', '0', 0], ['Bass', 'Freq', '#1c2290', '50.0 Hz', 0], ['Low Cut', '', '#8060d8', '10.0 Hz', 0], ['High Cut', '', '#cc50d8', '22.0 kHz', 1]];
const pt = (v, r, off = 0) => { const a = (220 - off + v * (280 + 2 * off)) * Math.PI / 180; return `${(11 + r * Math.sin(a)).toFixed(2)} ${(11 - r * Math.cos(a)).toFixed(2)}`; };
const arc = (a, b, c) => a === b ? '' : `<path d="M${pt(a, 8.4)}A8.400 8.400 0 ${b - a > .6 ? 1 : 0} 1 ${pt(b, 8.4)}" stroke="${c}"/>`;
$('macros').innerHTML = macros.map(([a, b, c, v, k]) => `<div class="macro"><b style="background:${c};color:${b === 'Freq' ? '#fff' : '#222'}"><i>${a}</i><i>${b}</i></b><svg width="22" height="22" fill="none" stroke-width="1.300">${arc(0, k, '#d5673a')}${arc(k, 1, '#222')}<path d="M11 11L${pt(k, k === .5 ? 8 : 6.8, 10)}" stroke="#111" stroke-width="1.500"/></svg><span>${v}</span></div>`).join('');

$('previewWave').setAttribute('d', wave([[0, 4], [20, 4], [60, 5], [110, 4], [150, 2], [200, .5], [255, 0]], 6.5, 2.2, 15, 15));
$('miniWave').setAttribute('d', wave([[0, 2], [20, 1.8], [60, 1.8], [90, .6], [134, 0]], 2.8, 1.2, 8) + wave([[0, 2], [20, 1.8], [60, 1.8], [90, .6], [134, 0]], 8.2, 1.2, 8));
```
